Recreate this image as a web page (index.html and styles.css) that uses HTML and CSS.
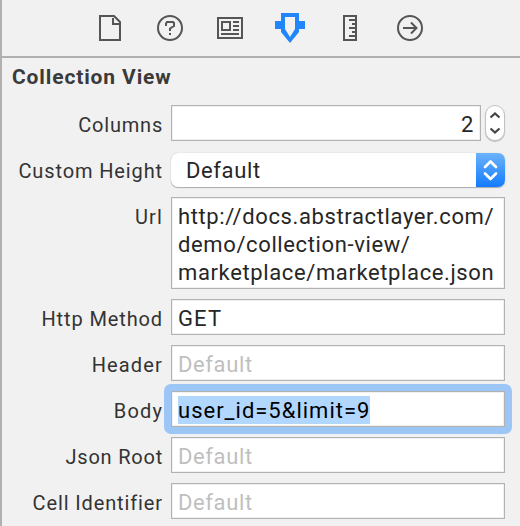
FILE: index.html
```html
<!DOCTYPE html>
<html lang="en">
<head>
<meta charset="utf-8">
<title>Attributes Inspector</title>
<link rel="stylesheet" href="styles.css">
</head>
<body>
<div class="inspector">
  <nav class="tabs">
    <svg class="tab" viewBox="0 0 32 32"><path d="M6 4H20L26 10V28H6ZM19 6V12H25M20 4L26 10"/></svg>
    <svg class="tab" viewBox="0 0 32 32"><circle cx="16" cy="16" r="12"/><path d="M12 14V11.500L13 10H19L20 11V14L16 16.500V19M16 21V23"/></svg>
    <svg class="tab" viewBox="0 0 32 32"><path d="M4 6H28V26H4ZM8 10H16V18H8ZM19 10H25M19 14H25M19 18H25M7 22H25"/></svg>
    <svg class="tab active" viewBox="0 0 32 32"><path fill-rule="evenodd" d="M7 1H25V9H31V17H25V20L16 31L7 20V17H1V9H7ZM11 5V17L16 25L21 17V5Z"/></svg>
    <svg class="tab" viewBox="0 0 32 32"><path d="M10 4H22V28H10ZM15 8H22M18 12H22M15 16H22M18 20H22M15 24H22"/></svg>
    <svg class="tab" viewBox="0 0 32 32"><circle cx="16" cy="16" r="12"/><path d="M9 16H23M17 10.500L22.500 16L17 21.500"/></svg>
  </nav>
  <h1 class="title">Collection View</h1>
  <form class="rows">
    <div class="row"><label class="t-columns">Columns</label><div class="field number">2</div>
      <div class="stepper"><svg viewBox="0 0 18 34"><path d="M4.500 11.500L9 7.500L13.500 11.500M4.500 22.500L9 26.500L13.500 22.500"/></svg></div></div>
    <div class="row"><label>Custom Height</label><div class="popup"><span>Default</span><div class="arrows"><svg viewBox="0 0 29 34"><path d="M9 14L14.500 8.500L20 14M9 20.500L14.500 26L20 20.500"/></svg></div></div></div>
    <div class="row tall"><label class="t-short">Url</label><div class="field multi">http://docs.abstractlayer.com/<br>demo/collection-view/<br>marketplace/marketplace.json</div></div>
    <div class="row"><label>Http Method</label><div class="field t-get">GET</div></div>
    <div class="row"><label class="t-short">Header</label><div class="field placeholder">Default</div></div>
    <div class="row"><label class="t-short">Body</label><div class="field focused"><span class="selection">user_id=5&amp;limit=9</span></div></div>
    <div class="row"><label class="t-columns">Json Root</label><div class="field placeholder">Default</div></div>
    <div class="row"><label>Cell Identifier</label><div class="field placeholder">Default</div></div>
  </form>
</div>
</body>
</html>
```
FILE: styles.css
```css
* { box-sizing: border-box; }
body { margin: 0; background: #f1f1f1; font-family: Roboto, sans-serif; color: #262626; }
.inspector { width: 520px; height: 526px; border-left: 2px solid #b0b0b0; overflow: hidden; }
.tabs { height: 58px; border-bottom: 2px solid #b0b0b0; display: flex; gap: 28px; padding: 12px 0 0 92px; }
.tab { width: 32px; height: 32px; flex: none; fill: none; stroke: #555; stroke-width: 2; }
.tab.active { fill: #2185fb; stroke: none; }
.title { margin: 0; height: 47px; padding: 5px 0 0 10px; font-size: 21px; line-height: 28px; font-weight: 700; letter-spacing: 0.87px; color: #3a3a3a; }
.rows { display: flex; flex-direction: column; gap: 10px; width: 503px; }
.row { display: flex; height: 36px; }
.row.tall { height: 92px; }
label { width: 161px; margin-right: 8px; font-size: 20px; line-height: 40px; text-align: right; white-space: nowrap; letter-spacing: 0.88px; color: #333; }
.t-columns { letter-spacing: 0.78px; }
.t-short { letter-spacing: 1.15px; }
.field { flex: 1; background: #fff; border: 1px solid #b2b2b2; box-shadow: inset 0 0 0 1px #f0f0f0; padding: 0 6px; font-size: 22px; line-height: 37px; white-space: nowrap; letter-spacing: 0.62px; }
.field.number { text-align: right; }
.multi { padding-top: 5px; line-height: 28px; }
.t-get { letter-spacing: 1.1px; }
.placeholder { color: #bfbfbf; }
.focused { color: #000; position: relative; }
.focused::before { content: ""; position: absolute; inset: -8px; border: 7px solid #9bc6f6; border-radius: 7px; }
.selection { display: inline-block; height: 28px; line-height: 29px; margin-top: 4px; background: #b2d7ff; vertical-align: top; letter-spacing: 1px; }
.stepper { width: 20px; height: 36px; margin-left: 4px; background: #fff; border: 1px solid #c3c3c3; border-radius: 10px; box-shadow: 0 1px 1px #bbb; }
.stepper svg { display: block; width: 18px; height: 34px; fill: none; stroke: #444; stroke-width: 2.2; }
.popup { flex: 1; height: 34px; margin-top: 2px; display: flex; justify-content: space-between; background: #fff; border-radius: 7px; overflow: hidden; box-shadow: 0 0 1px 0 #aaa, 0 1px 1px 0 #aaa; padding-left: 15px; font-size: 22px; line-height: 36px; letter-spacing: 0.62px; }
.arrows { width: 29px; height: 34px; background: linear-gradient(#6bb3fa, #147bfd); }
.arrows svg { display: block; width: 29px; height: 34px; fill: none; stroke: #fff; stroke-width: 2.7; stroke-linecap: round; stroke-linejoin: round; }
```
